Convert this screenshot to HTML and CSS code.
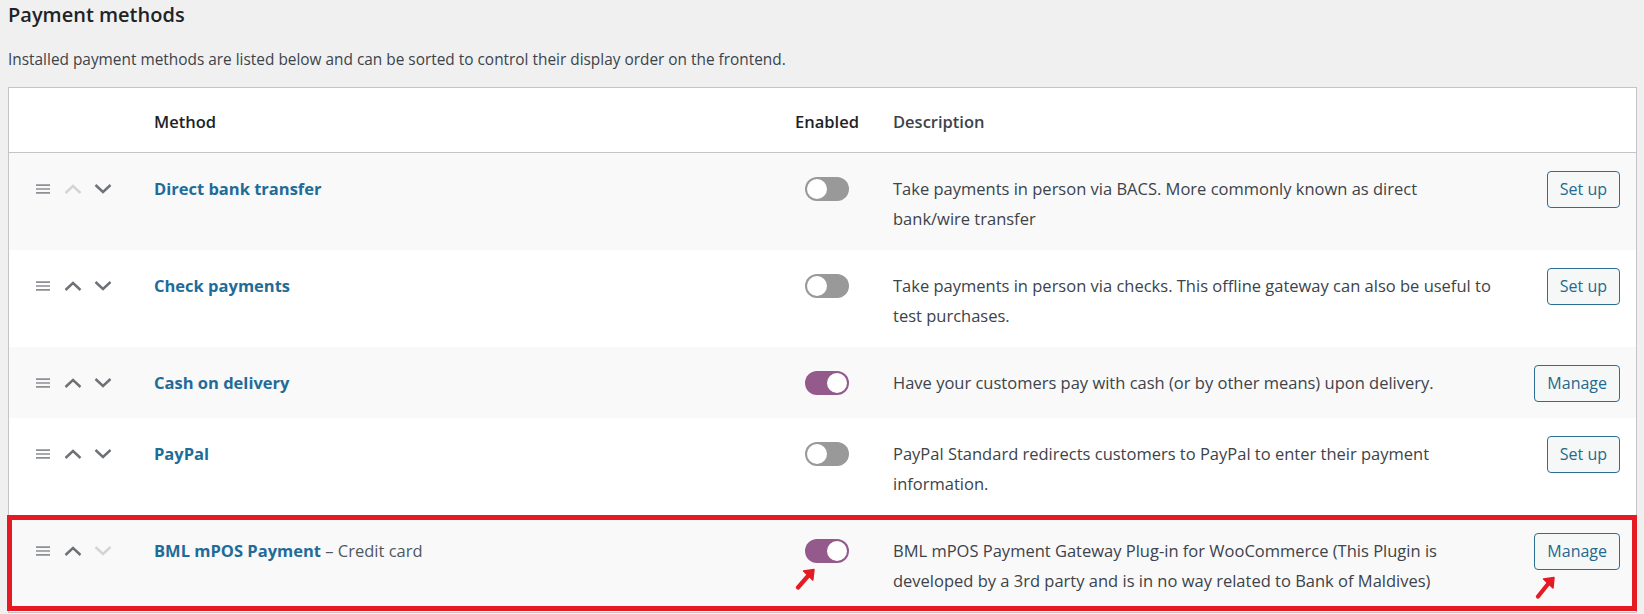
FILE: index.html
```html
<!DOCTYPE html>
<html lang="en">
<head>
<meta charset="utf-8">
<title>Payment methods</title>
<link rel="stylesheet" href="styles.css">
</head>
<body>
<div class="page">
  <h2 class="title">Payment methods</h2>
  <p class="intro">Installed payment methods are listed below and can be sorted to control their display order on the frontend.</p>

  <div class="table">
    <div class="row head">
      <div class="c-sort"></div>
      <div class="c-name">Method</div>
      <div class="c-status">Enabled</div>
      <div class="c-desc">Description</div>
      <div class="c-action"></div>
    </div>

    <div class="row stripe">
      <div class="c-sort">
        <svg class="handle" viewBox="0 0 14 10"><path d="M0 1.2h14M0 5h14M0 8.8h14"/></svg>
        <svg class="chev off" viewBox="0 0 18 10"><path d="M1.5 9L9 2l7.5 7"/></svg>
        <svg class="chev" viewBox="0 0 18 10"><path d="M1.5 1L9 8l7.5-7"/></svg>
      </div>
      <div class="c-name"><a href="#">Direct bank transfer</a></div>
      <div class="c-status"><span class="toggle"></span></div>
      <div class="c-desc">Take payments in person via BACS. More commonly known as direct<br>bank/wire transfer</div>
      <div class="c-action"><a class="button" href="#">Set up</a></div>
    </div>

    <div class="row">
      <div class="c-sort">
        <svg class="handle" viewBox="0 0 14 10"><path d="M0 1.2h14M0 5h14M0 8.8h14"/></svg>
        <svg class="chev" viewBox="0 0 18 10"><path d="M1.5 9L9 2l7.5 7"/></svg>
        <svg class="chev" viewBox="0 0 18 10"><path d="M1.5 1L9 8l7.5-7"/></svg>
      </div>
      <div class="c-name"><a href="#">Check payments</a></div>
      <div class="c-status"><span class="toggle"></span></div>
      <div class="c-desc">Take payments in person via checks. This offline gateway can also be useful to test purchases.</div>
      <div class="c-action"><a class="button" href="#">Set up</a></div>
    </div>

    <div class="row stripe">
      <div class="c-sort">
        <svg class="handle" viewBox="0 0 14 10"><path d="M0 1.2h14M0 5h14M0 8.8h14"/></svg>
        <svg class="chev" viewBox="0 0 18 10"><path d="M1.5 9L9 2l7.5 7"/></svg>
        <svg class="chev" viewBox="0 0 18 10"><path d="M1.5 1L9 8l7.5-7"/></svg>
      </div>
      <div class="c-name"><a href="#">Cash on delivery</a></div>
      <div class="c-status"><span class="toggle on"></span></div>
      <div class="c-desc">Have your customers pay with cash (or by other means) upon delivery.</div>
      <div class="c-action"><a class="button" href="#">Manage</a></div>
    </div>

    <div class="row">
      <div class="c-sort">
        <svg class="handle" viewBox="0 0 14 10"><path d="M0 1.2h14M0 5h14M0 8.8h14"/></svg>
        <svg class="chev" viewBox="0 0 18 10"><path d="M1.5 9L9 2l7.5 7"/></svg>
        <svg class="chev" viewBox="0 0 18 10"><path d="M1.5 1L9 8l7.5-7"/></svg>
      </div>
      <div class="c-name"><a href="#">PayPal</a></div>
      <div class="c-status"><span class="toggle"></span></div>
      <div class="c-desc">PayPal Standard redirects customers to PayPal to enter their payment information.</div>
      <div class="c-action"><a class="button" href="#">Set up</a></div>
    </div>

    <div class="row stripe marked">
      <div class="c-sort">
        <svg class="handle" viewBox="0 0 14 10"><path d="M0 1.2h14M0 5h14M0 8.8h14"/></svg>
        <svg class="chev" viewBox="0 0 18 10"><path d="M1.5 9L9 2l7.5 7"/></svg>
        <svg class="chev off" viewBox="0 0 18 10"><path d="M1.5 1L9 8l7.5-7"/></svg>
      </div>
      <div class="c-name"><a href="#">BML mPOS Payment</a><span class="sub"> – Credit card</span></div>
      <div class="c-status"><span class="toggle on"></span></div>
      <div class="c-desc">BML mPOS Payment Gateway Plug-in for WooCommerce (This Plugin is developed by a 3rd party and is in no way related to Bank of Maldives)</div>
      <div class="c-action"><a class="button" href="#">Manage</a></div>

      <div class="highlight"></div>
      <svg class="arrow arrow-a" viewBox="0 0 22 22"><path class="shaft" d="M4 19.5L14 8"/><path class="head" d="M9.5 3L20 1.5l-1.2 10.5z"/></svg>
      <svg class="arrow arrow-b" viewBox="0 0 22 24"><path class="shaft" d="M4 21.5L14 9"/><path class="head" d="M9.5 4L20 2.5l-1 10.5z"/></svg>
    </div>
  </div>
</div>
</body>
</html>
```

FILE: styles.css
```css
html, body {
  margin: 0;
  padding: 0;
  background: #f0f0f1;
}

body {
  font-family: "Open Sans", "Noto Sans", "Liberation Sans", sans-serif;
  color: #3c434a;
  font-size: 16.5px;
}

.page {
  padding: 0 7px 0 8px;
}

.title {
  margin: 0;
  padding-top: 1px;
  font-size: 20px;
  font-weight: 600;
  line-height: 28px;
  color: #1d2327;
}

.intro {
  margin: 18px 0 0;
  font-size: 15.4px;
  line-height: 26px;
  color: #3c434a;
}

.table {
  margin-top: 14px;
  background: #fff;
  border: 1px solid #c3c4c7;
}

.row {
  display: grid;
  grid-template-columns: 145px 641px 98px 622px 1fr;
  align-items: start;
  padding: 21px 0 16px;
  line-height: 30px;
  position: relative;
}

.row.stripe {
  background: #f9f9f9;
}

.row.head {
  align-items: center;
  height: 65px;
  padding: 4px 0 0;
  box-sizing: border-box;
  border-bottom: 1px solid #c3c4c7;
  font-weight: 600;
  color: #1d2327;
}

.c-sort {
  display: flex;
  align-items: center;
  height: 30px;
  padding-left: 27px;
}

.handle {
  width: 14px;
  height: 10px;
  fill: none;
  stroke: #8c8f94;
  stroke-width: 1.7;
}

.chev {
  width: 18px;
  height: 10px;
  margin-left: 12px;
  fill: none;
  stroke: #6e7175;
  stroke-width: 2.4;
}

.handle + .chev {
  margin-left: 14px;
}

.chev.off {
  stroke: #d2d4d6;
}

.c-name a {
  color: #1f6c98;
  font-weight: 700;
  text-decoration: none;
}

.c-name .sub {
  color: #50575e;
}

.c-status {
  display: flex;
  align-items: center;
  height: 30px;
}

.toggle {
  position: relative;
  display: block;
  width: 44px;
  height: 24px;
  margin-left: 10px;
  border-radius: 12px;
  background: #999;
}

.toggle::after {
  content: "";
  position: absolute;
  top: 2px;
  left: 2px;
  width: 20px;
  height: 20px;
  border-radius: 50%;
  background: #fff;
}

.toggle.on {
  background: #935a8b;
}

.toggle.on::after {
  left: 22px;
}

.c-desc {
  color: #3c434a;
}

.c-action {
  justify-self: end;
  padding-right: 16px;
}

.button {
  display: block;
  margin-top: -3px;
  height: 37px;
  box-sizing: border-box;
  padding: 0 12px;
  border: 1px solid #2c6f95;
  border-radius: 4px;
  background: #f6f7f7;
  color: #23698f;
  font-size: 16px;
  line-height: 35px;
  text-decoration: none;
}

.highlight {
  position: absolute;
  left: -2px;
  right: -1px;
  top: 0;
  bottom: 1px;
  border: 5px solid #e41b23;
  pointer-events: none;
}

.arrow {
  position: absolute;
  stroke-linecap: round;
  stroke-linejoin: round;
}

.arrow .shaft {
  fill: none;
  stroke: #e41b23;
  stroke-width: 4.2;
}

.arrow .head {
  fill: #e41b23;
  stroke: #e41b23;
  stroke-width: 1.5;
}

.arrow-a {
  left: 785px;
  top: 53px;
  width: 22px;
  height: 22px;
}

.arrow-b {
  left: 1525px;
  top: 60px;
  width: 22px;
  height: 24px;
}
```
